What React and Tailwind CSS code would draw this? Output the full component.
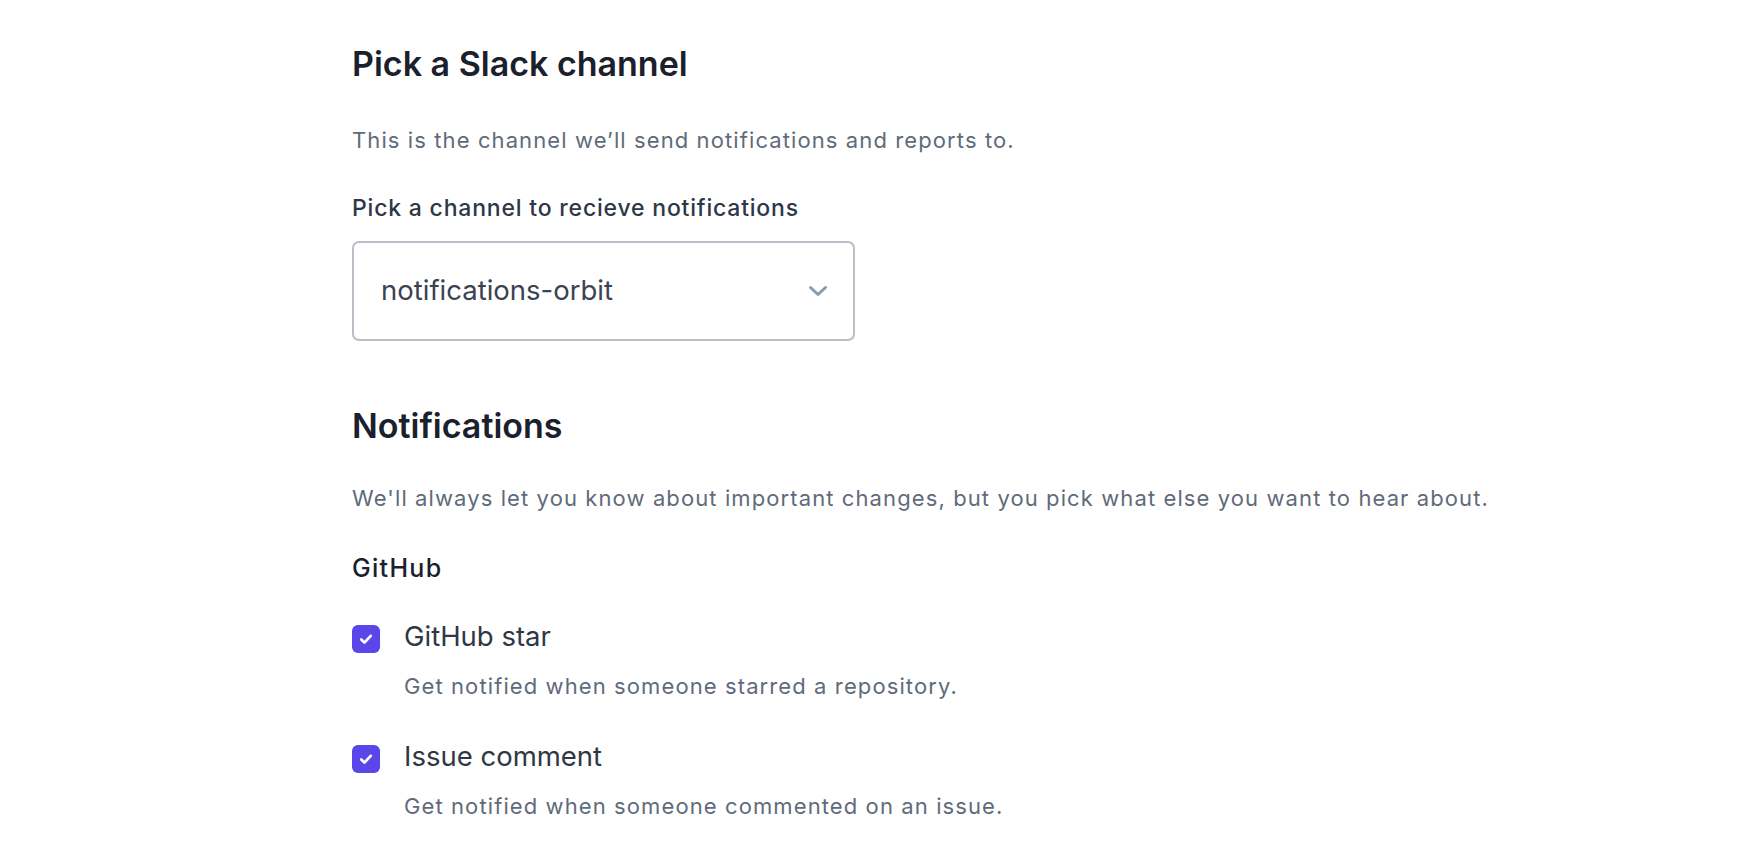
import React from "react";

function Check() {
  return (
    <span className="flex h-[28px] w-[28px] shrink-0 items-center justify-center rounded-[6px] bg-[#5b46ea]">
      <svg width="18" height="18" viewBox="0 0 16 16" fill="none">
        <path d="M3.8 8.4l2.8 2.8 5.6-6" stroke="white" strokeWidth="2.4" strokeLinecap="round" strokeLinejoin="round" />
      </svg>
    </span>
  );
}

function Item({ title, desc }) {
  return (
    <div className="flex gap-[24px]">
      <div className="pt-[6px]"><Check /></div>
      <div>
        <div className="text-[27.5px] leading-[34px] text-[#2f3744]">{title}</div>
        <div className="mt-[19px] text-[22px] leading-[28px] tracking-[1.1px] text-[#5f6b7a]">{desc}</div>
      </div>
    </div>
  );
}

export default function App() {
  return (
    <div className="min-h-[844px] bg-white font-['Inter',sans-serif]">
      <div className="pl-[352px] pt-[44px]">
        <h2 className="text-[34px] font-semibold leading-[40px] text-[#1a202c]">Pick a Slack channel</h2>
        <p className="mt-[42px] text-[22px] leading-[28px] tracking-[1.1px] text-[#5f6b7a]">This is the channel we’ll send notifications and reports to.</p>
        <div className="mt-[40px] text-[23px] font-medium leading-[28px] tracking-[0.8px] text-[#2d3748]">Pick a channel to recieve notifications</div>
        <div className="mt-[19px] flex h-[100px] w-[503px] items-center justify-between rounded-[7px] border-2 border-[#b8bec8] pl-[27px] pr-[25px]">
          <span className="text-[27.5px] text-[#3b4252]">notifications-orbit</span>
          <svg width="20" height="12" viewBox="0 0 20 12" fill="none">
            <path d="M2.5 2.5l7.5 7 7.5-7" stroke="#8a9bb0" strokeWidth="3" strokeLinecap="round" strokeLinejoin="round" />
          </svg>
        </div>
        <h2 className="mt-[65px] text-[34px] font-semibold leading-[40px] text-[#1a202c]">Notifications</h2>
        <p className="mt-[38px] text-[22px] leading-[28px] tracking-[1.1px] text-[#5f6b7a]">We'll always let you know about important changes, but you pick what else you want to hear about.</p>
        <div className="mt-[41px] text-[25px] font-medium leading-[30px] tracking-[1.3px] text-[#1a202c]">GitHub</div>
        <div className="mt-[36px] flex flex-col gap-[39px]">
          <Item title="GitHub star" desc="Get notified when someone starred a repository." />
          <Item title="Issue comment" desc="Get notified when someone commented on an issue." />
        </div>
      </div>
    </div>
  );
}
